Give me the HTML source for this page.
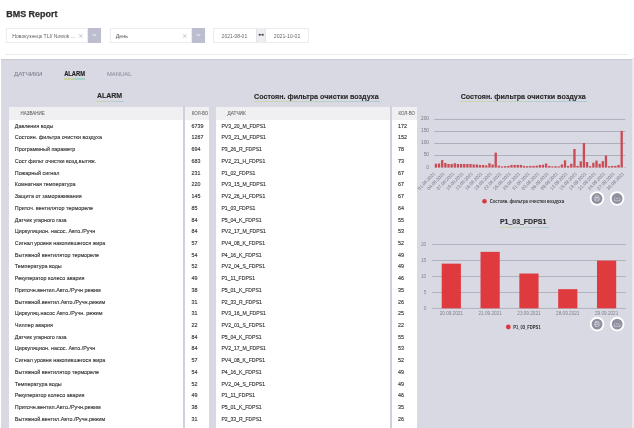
<!DOCTYPE html>
<html><head><meta charset="utf-8">
<style>
*{margin:0;padding:0;box-sizing:border-box}
html,body{width:634px;height:428px;overflow:hidden;background:#fff;font-family:"Liberation Sans",sans-serif;color:#333}
.a{position:absolute}
.ov{position:absolute;left:0;top:0;font-family:"Liberation Sans",sans-serif}
.sel{position:absolute;top:28.2px;height:14.4px;background:#fff;border:0.6px solid #ebebf0}
.btn{position:absolute;top:28.2px;height:14.4px;width:12.9px;background:#bdbdd0}
.hl{left:4.5px;top:53.8px;width:623.5px;height:0.9px;background:#ebebef}
.panel{left:1px;top:58.5px;width:631.3px;height:370px;background:#d9d9e4;border-top:1px solid #cacad4}
.ul{height:1px;background:linear-gradient(90deg,#cfd6a6,#bdd4c0 45%,#abc8dc)}
.tbl{background:#fff;top:106.6px;height:330px}
.hdr{top:106.6px;height:13.2px;background:#f0f0f3}
</style></head><body><div id="wrap" style="position:absolute;left:0;top:0;width:634px;height:428px;filter:blur(0.28px)">

<div class="sel" style="left:6.1px;width:82.2px"></div>
<div class="btn" style="left:88.3px"><svg width="13" height="14" style="position:absolute;left:0;top:0"><path d="M4.6 6 L6.4 7.8 L8.2 6" fill="none" stroke="#ffffff" stroke-width="0.85"/></svg></div>
<svg class="a" style="left:77px;top:34px" width="8" height="5"><path d="M2 0.2 L5.4 3.6 M5.4 0.2 L2 3.6" stroke="#a5a5a5" stroke-width="0.6"/></svg>

<div class="sel" style="left:109.5px;width:82.2px"></div>
<div class="btn" style="left:191.7px;width:13.3px"><svg width="13" height="14" style="position:absolute;left:0;top:0"><path d="M4.8 6 L6.6 7.8 L8.4 6" fill="none" stroke="#ffffff" stroke-width="0.85"/></svg></div>
<svg class="a" style="left:180.5px;top:34px" width="8" height="5"><path d="M2 0.2 L5.4 3.6 M5.4 0.2 L2 3.6" stroke="#a5a5a5" stroke-width="0.6"/></svg>

<div class="sel" style="left:213.2px;width:95.6px"></div>
<div class="a" style="left:256.3px;top:28.5px;width:9.5px;height:13.8px;background:#eeeef1;border-left:0.5px solid #e2e2e8;border-right:0.5px solid #e2e2e8"></div>
<svg class="a" style="left:250px;top:26px" width="22" height="18"><path d="M9.6 8.8 H12.8" stroke="#555" stroke-width="0.7"/><circle cx="9.6" cy="8.8" r="1.05" fill="#4a4a4a"/><circle cx="12.8" cy="8.8" r="1.05" fill="#4a4a4a"/></svg>

<div class="a hl"></div>
<div class="a panel"></div>
<div class="a" style="left:632.3px;top:58.2px;width:2px;height:370px;background:#e9e9ef"></div>

<div class="a ul" style="left:64.2px;top:78px;width:20.8px;height:1.9px;background:linear-gradient(90deg,#c9d39c 0%,#c9d39c 40%,#a6d1cc 60%,#a6d1cc 100%)"></div>
<div class="a ul" style="left:96px;top:100.9px;width:28.1px"></div>
<div class="a ul" style="left:253.5px;top:101px;width:126.5px"></div>
<div class="a ul" style="left:460px;top:100.8px;width:127.3px"></div>
<div class="a ul" style="left:499.5px;top:226.5px;width:49.4px"></div>

<!-- tables -->
<div class="a tbl" style="left:9px;width:174.2px"></div>
<div class="a" style="left:183.2px;top:106.4px;width:1.9px;height:330px;background:#d0d0dc"></div>
<div class="a tbl" style="left:185.1px;width:24.2px"></div>
<div class="a" style="left:209.3px;top:106.4px;width:6.4px;height:330px;background:#d8d8e3"></div>
<div class="a tbl" style="left:215.7px;width:174.7px"></div>
<div class="a" style="left:390.4px;top:106.4px;width:1.6px;height:330px;background:#d0d0dc"></div>
<div class="a tbl" style="left:392px;width:25px"></div>

<div class="a hdr" style="left:9px;width:174.2px"></div>
<div class="a hdr" style="left:185.1px;width:24.2px"></div>
<div class="a hdr" style="left:215.7px;width:174.7px"></div>
<div class="a hdr" style="left:392px;width:25px"></div>

<svg class="ov" width="634" height="428" viewBox="0 0 634 428">
<text x="6.30" y="17.30" font-size="8.6" font-weight="bold" fill="#2e2e2e" stroke="#2e2e2e" stroke-width="0.25" textLength="51.10" lengthAdjust="spacingAndGlyphs">BMS Report</text>
<text x="12.30" y="38.10" font-size="5.5" fill="#666" textLength="62.70" lengthAdjust="spacingAndGlyphs">Новокузнецк TLI/ Nowok ...</text>
<text x="115.70" y="37.90" font-size="5.5" fill="#555" textLength="12.30" lengthAdjust="spacingAndGlyphs">День</text>
<text x="221.60" y="37.90" font-size="5.5" fill="#666" textLength="25.60" lengthAdjust="spacingAndGlyphs">2021-08-01</text>
<text x="273.80" y="37.90" font-size="5.5" fill="#666" textLength="26.50" lengthAdjust="spacingAndGlyphs">2021-10-01</text>
<text x="14.00" y="76.00" font-size="6.2" fill="#8a8a96" stroke="#8a8a96" stroke-width="0.15" textLength="28.40" lengthAdjust="spacingAndGlyphs">ДАТЧИКИ</text>
<text x="64.20" y="76.10" font-size="6.4" font-weight="bold" fill="#222" stroke="#222" stroke-width="0.15" textLength="20.80" lengthAdjust="spacingAndGlyphs">ALARM</text>
<text x="106.90" y="76.00" font-size="6.2" fill="#9c9ca8" stroke="#9c9ca8" stroke-width="0.2" textLength="24.60" lengthAdjust="spacingAndGlyphs">MANUAL</text>
<text x="96.90" y="98.40" font-size="7.9" font-weight="bold" fill="#2b2b2b" stroke="#2b2b2b" stroke-width="0.15" textLength="25.30" lengthAdjust="spacingAndGlyphs">ALARM</text>
<text x="254.10" y="98.60" font-size="7.9" font-weight="bold" fill="#2b2b2b" stroke="#2b2b2b" stroke-width="0.15" textLength="124.55" lengthAdjust="spacingAndGlyphs">Состоян. фильтра очистки воздуха</text>
<text x="460.70" y="98.80" font-size="7.9" font-weight="bold" fill="#2b2b2b" stroke="#2b2b2b" stroke-width="0.15" textLength="125.15" lengthAdjust="spacingAndGlyphs">Состоян. фильтра очистки воздуха</text>
<text x="499.90" y="223.80" font-size="7.6" font-weight="bold" fill="#2b2b2b" stroke="#2b2b2b" stroke-width="0.15" textLength="46.40" lengthAdjust="spacingAndGlyphs">P1_03_FDPS1</text>
<text x="20.60" y="114.60" font-size="4.5" fill="#666" stroke="#666" stroke-width="0.08" textLength="24.10" lengthAdjust="spacingAndGlyphs">НАЗВАНИЕ</text>
<text x="191.80" y="114.60" font-size="4.5" fill="#666" stroke="#666" stroke-width="0.08" textLength="16.40" lengthAdjust="spacingAndGlyphs">КОЛ-ВО</text>
<text x="227.50" y="114.60" font-size="4.5" fill="#666" stroke="#666" stroke-width="0.08" textLength="18.20" lengthAdjust="spacingAndGlyphs">ДАТЧИК</text>
<text x="398.50" y="114.60" font-size="4.5" fill="#666" stroke="#666" stroke-width="0.08" textLength="16.40" lengthAdjust="spacingAndGlyphs">КОЛ-ВО</text>
<text x="14.80" y="127.75" font-size="5.8" fill="#333" stroke="#333" stroke-width="0.13" textLength="38.66" lengthAdjust="spacingAndGlyphs">Давления воды</text>
<text x="191.50" y="127.75" font-size="5.8" fill="#333" stroke="#333" stroke-width="0.13" textLength="11.87" lengthAdjust="spacingAndGlyphs">6739</text>
<text x="14.80" y="139.47" font-size="5.8" fill="#333" stroke="#333" stroke-width="0.13" textLength="87.18" lengthAdjust="spacingAndGlyphs">Состоян. фильтра очистки воздуха</text>
<text x="191.50" y="139.47" font-size="5.8" fill="#333" stroke="#333" stroke-width="0.13" textLength="11.87" lengthAdjust="spacingAndGlyphs">1267</text>
<text x="14.80" y="151.19" font-size="5.8" fill="#333" stroke="#333" stroke-width="0.13" textLength="60.55" lengthAdjust="spacingAndGlyphs">Программный параметр</text>
<text x="191.50" y="151.19" font-size="5.8" fill="#333" stroke="#333" stroke-width="0.13" textLength="8.90" lengthAdjust="spacingAndGlyphs">694</text>
<text x="14.80" y="162.91" font-size="5.8" fill="#333" stroke="#333" stroke-width="0.13" textLength="81.25" lengthAdjust="spacingAndGlyphs">Сост фильт очистки возд.вытяж.</text>
<text x="191.50" y="162.91" font-size="5.8" fill="#333" stroke="#333" stroke-width="0.13" textLength="8.90" lengthAdjust="spacingAndGlyphs">683</text>
<text x="14.80" y="174.63" font-size="5.8" fill="#333" stroke="#333" stroke-width="0.13" textLength="44.60" lengthAdjust="spacingAndGlyphs">Пожарный сигнал</text>
<text x="191.50" y="174.63" font-size="5.8" fill="#333" stroke="#333" stroke-width="0.13" textLength="8.90" lengthAdjust="spacingAndGlyphs">231</text>
<text x="14.80" y="186.35" font-size="5.8" fill="#333" stroke="#333" stroke-width="0.13" textLength="60.67" lengthAdjust="spacingAndGlyphs">Комнатная температура</text>
<text x="191.50" y="186.35" font-size="5.8" fill="#333" stroke="#333" stroke-width="0.13" textLength="8.90" lengthAdjust="spacingAndGlyphs">220</text>
<text x="14.80" y="198.07" font-size="5.8" fill="#333" stroke="#333" stroke-width="0.13" textLength="66.99" lengthAdjust="spacingAndGlyphs">Защита от замораживания</text>
<text x="191.50" y="198.07" font-size="5.8" fill="#333" stroke="#333" stroke-width="0.13" textLength="8.90" lengthAdjust="spacingAndGlyphs">145</text>
<text x="14.80" y="209.79" font-size="5.8" fill="#333" stroke="#333" stroke-width="0.13" textLength="78.32" lengthAdjust="spacingAndGlyphs">Приточ. вентилятор термореле</text>
<text x="191.50" y="209.79" font-size="5.8" fill="#333" stroke="#333" stroke-width="0.13" textLength="5.94" lengthAdjust="spacingAndGlyphs">85</text>
<text x="14.80" y="221.51" font-size="5.8" fill="#333" stroke="#333" stroke-width="0.13" textLength="51.82" lengthAdjust="spacingAndGlyphs">Датчик угарного газа</text>
<text x="191.50" y="221.51" font-size="5.8" fill="#333" stroke="#333" stroke-width="0.13" textLength="5.94" lengthAdjust="spacingAndGlyphs">84</text>
<text x="14.80" y="233.23" font-size="5.8" fill="#333" stroke="#333" stroke-width="0.13" textLength="80.42" lengthAdjust="spacingAndGlyphs">Циркуляцион. насос. Авто./Ручн</text>
<text x="191.50" y="233.23" font-size="5.8" fill="#333" stroke="#333" stroke-width="0.13" textLength="5.94" lengthAdjust="spacingAndGlyphs">84</text>
<text x="14.80" y="244.95" font-size="5.8" fill="#333" stroke="#333" stroke-width="0.13" textLength="90.51" lengthAdjust="spacingAndGlyphs">Сигнал уровня накопившегося жира</text>
<text x="191.50" y="244.95" font-size="5.8" fill="#333" stroke="#333" stroke-width="0.13" textLength="5.94" lengthAdjust="spacingAndGlyphs">57</text>
<text x="14.80" y="256.67" font-size="5.8" fill="#333" stroke="#333" stroke-width="0.13" textLength="84.29" lengthAdjust="spacingAndGlyphs">Вытяжной вентилятор термореле</text>
<text x="191.50" y="256.67" font-size="5.8" fill="#333" stroke="#333" stroke-width="0.13" textLength="5.94" lengthAdjust="spacingAndGlyphs">54</text>
<text x="14.80" y="268.39" font-size="5.8" fill="#333" stroke="#333" stroke-width="0.13" textLength="46.88" lengthAdjust="spacingAndGlyphs">Температура воды</text>
<text x="191.50" y="268.39" font-size="5.8" fill="#333" stroke="#333" stroke-width="0.13" textLength="5.94" lengthAdjust="spacingAndGlyphs">52</text>
<text x="14.80" y="280.11" font-size="5.8" fill="#333" stroke="#333" stroke-width="0.13" textLength="69.63" lengthAdjust="spacingAndGlyphs">Рекуператор колесо авария</text>
<text x="191.50" y="280.11" font-size="5.8" fill="#333" stroke="#333" stroke-width="0.13" textLength="5.94" lengthAdjust="spacingAndGlyphs">49</text>
<text x="14.80" y="291.83" font-size="5.8" fill="#333" stroke="#333" stroke-width="0.13" textLength="85.99" lengthAdjust="spacingAndGlyphs">Приточн.вентил.Авто./Ручн режим</text>
<text x="191.50" y="291.83" font-size="5.8" fill="#333" stroke="#333" stroke-width="0.13" textLength="5.94" lengthAdjust="spacingAndGlyphs">38</text>
<text x="14.80" y="303.55" font-size="5.8" fill="#333" stroke="#333" stroke-width="0.13" textLength="90.48" lengthAdjust="spacingAndGlyphs">Вытяжной.вентил.Авто./Ручн.режим</text>
<text x="191.50" y="303.55" font-size="5.8" fill="#333" stroke="#333" stroke-width="0.13" textLength="5.94" lengthAdjust="spacingAndGlyphs">31</text>
<text x="14.80" y="315.27" font-size="5.8" fill="#333" stroke="#333" stroke-width="0.13" textLength="87.69" lengthAdjust="spacingAndGlyphs">Циркуляц.насос Авто./Ручн. режим</text>
<text x="191.50" y="315.27" font-size="5.8" fill="#333" stroke="#333" stroke-width="0.13" textLength="5.94" lengthAdjust="spacingAndGlyphs">31</text>
<text x="14.80" y="326.99" font-size="5.8" fill="#333" stroke="#333" stroke-width="0.13" textLength="38.14" lengthAdjust="spacingAndGlyphs">Чиллер авария</text>
<text x="191.50" y="326.99" font-size="5.8" fill="#333" stroke="#333" stroke-width="0.13" textLength="5.94" lengthAdjust="spacingAndGlyphs">22</text>
<text x="14.80" y="338.71" font-size="5.8" fill="#333" stroke="#333" stroke-width="0.13" textLength="51.82" lengthAdjust="spacingAndGlyphs">Датчик угарного газа</text>
<text x="191.50" y="338.71" font-size="5.8" fill="#333" stroke="#333" stroke-width="0.13" textLength="5.94" lengthAdjust="spacingAndGlyphs">84</text>
<text x="14.80" y="350.43" font-size="5.8" fill="#333" stroke="#333" stroke-width="0.13" textLength="80.42" lengthAdjust="spacingAndGlyphs">Циркуляцион. насос. Авто./Ручн</text>
<text x="191.50" y="350.43" font-size="5.8" fill="#333" stroke="#333" stroke-width="0.13" textLength="5.94" lengthAdjust="spacingAndGlyphs">84</text>
<text x="14.80" y="362.15" font-size="5.8" fill="#333" stroke="#333" stroke-width="0.13" textLength="90.51" lengthAdjust="spacingAndGlyphs">Сигнал уровня накопившегося жира</text>
<text x="191.50" y="362.15" font-size="5.8" fill="#333" stroke="#333" stroke-width="0.13" textLength="5.94" lengthAdjust="spacingAndGlyphs">57</text>
<text x="14.80" y="373.87" font-size="5.8" fill="#333" stroke="#333" stroke-width="0.13" textLength="84.29" lengthAdjust="spacingAndGlyphs">Вытяжной вентилятор термореле</text>
<text x="191.50" y="373.87" font-size="5.8" fill="#333" stroke="#333" stroke-width="0.13" textLength="5.94" lengthAdjust="spacingAndGlyphs">54</text>
<text x="14.80" y="385.59" font-size="5.8" fill="#333" stroke="#333" stroke-width="0.13" textLength="46.88" lengthAdjust="spacingAndGlyphs">Температура воды</text>
<text x="191.50" y="385.59" font-size="5.8" fill="#333" stroke="#333" stroke-width="0.13" textLength="5.94" lengthAdjust="spacingAndGlyphs">52</text>
<text x="14.80" y="397.31" font-size="5.8" fill="#333" stroke="#333" stroke-width="0.13" textLength="69.63" lengthAdjust="spacingAndGlyphs">Рекуператор колесо авария</text>
<text x="191.50" y="397.31" font-size="5.8" fill="#333" stroke="#333" stroke-width="0.13" textLength="5.94" lengthAdjust="spacingAndGlyphs">49</text>
<text x="14.80" y="409.03" font-size="5.8" fill="#333" stroke="#333" stroke-width="0.13" textLength="85.99" lengthAdjust="spacingAndGlyphs">Приточн.вентил.Авто./Ручн.режим</text>
<text x="191.50" y="409.03" font-size="5.8" fill="#333" stroke="#333" stroke-width="0.13" textLength="5.94" lengthAdjust="spacingAndGlyphs">38</text>
<text x="14.80" y="420.75" font-size="5.8" fill="#333" stroke="#333" stroke-width="0.13" textLength="90.48" lengthAdjust="spacingAndGlyphs">Вытяжной.вентил.Авто./Ручн.режим</text>
<text x="191.50" y="420.75" font-size="5.8" fill="#333" stroke="#333" stroke-width="0.13" textLength="5.94" lengthAdjust="spacingAndGlyphs">31</text>
<text x="221.40" y="127.75" font-size="5.8" fill="#333" stroke="#333" stroke-width="0.13" textLength="44.54" lengthAdjust="spacingAndGlyphs">PV3_20_M_FDPS1</text>
<text x="398.10" y="127.75" font-size="5.8" fill="#333" stroke="#333" stroke-width="0.13" textLength="8.90" lengthAdjust="spacingAndGlyphs">172</text>
<text x="221.40" y="139.47" font-size="5.8" fill="#333" stroke="#333" stroke-width="0.13" textLength="44.54" lengthAdjust="spacingAndGlyphs">PV3_21_M_FDPS1</text>
<text x="398.10" y="139.47" font-size="5.8" fill="#333" stroke="#333" stroke-width="0.13" textLength="8.90" lengthAdjust="spacingAndGlyphs">152</text>
<text x="221.40" y="151.19" font-size="5.8" fill="#333" stroke="#333" stroke-width="0.13" textLength="40.57" lengthAdjust="spacingAndGlyphs">P3_26_R_FDPS1</text>
<text x="398.10" y="151.19" font-size="5.8" fill="#333" stroke="#333" stroke-width="0.13" textLength="5.94" lengthAdjust="spacingAndGlyphs">78</text>
<text x="221.40" y="162.91" font-size="5.8" fill="#333" stroke="#333" stroke-width="0.13" textLength="43.98" lengthAdjust="spacingAndGlyphs">PV2_21_H_FDPS1</text>
<text x="398.10" y="162.91" font-size="5.8" fill="#333" stroke="#333" stroke-width="0.13" textLength="5.94" lengthAdjust="spacingAndGlyphs">73</text>
<text x="221.40" y="174.63" font-size="5.8" fill="#333" stroke="#333" stroke-width="0.13" textLength="34.05" lengthAdjust="spacingAndGlyphs">P1_02_FDPS1</text>
<text x="398.10" y="174.63" font-size="5.8" fill="#333" stroke="#333" stroke-width="0.13" textLength="5.94" lengthAdjust="spacingAndGlyphs">67</text>
<text x="221.40" y="186.35" font-size="5.8" fill="#333" stroke="#333" stroke-width="0.13" textLength="44.54" lengthAdjust="spacingAndGlyphs">PV3_15_M_FDPS1</text>
<text x="398.10" y="186.35" font-size="5.8" fill="#333" stroke="#333" stroke-width="0.13" textLength="5.94" lengthAdjust="spacingAndGlyphs">67</text>
<text x="221.40" y="198.07" font-size="5.8" fill="#333" stroke="#333" stroke-width="0.13" textLength="43.98" lengthAdjust="spacingAndGlyphs">PV2_26_H_FDPS1</text>
<text x="398.10" y="198.07" font-size="5.8" fill="#333" stroke="#333" stroke-width="0.13" textLength="5.94" lengthAdjust="spacingAndGlyphs">67</text>
<text x="221.40" y="209.79" font-size="5.8" fill="#333" stroke="#333" stroke-width="0.13" textLength="34.05" lengthAdjust="spacingAndGlyphs">P1_03_FDPS1</text>
<text x="398.10" y="209.79" font-size="5.8" fill="#333" stroke="#333" stroke-width="0.13" textLength="5.94" lengthAdjust="spacingAndGlyphs">64</text>
<text x="221.40" y="221.51" font-size="5.8" fill="#333" stroke="#333" stroke-width="0.13" textLength="40.29" lengthAdjust="spacingAndGlyphs">P5_04_K_FDPS1</text>
<text x="398.10" y="221.51" font-size="5.8" fill="#333" stroke="#333" stroke-width="0.13" textLength="5.94" lengthAdjust="spacingAndGlyphs">55</text>
<text x="221.40" y="233.23" font-size="5.8" fill="#333" stroke="#333" stroke-width="0.13" textLength="44.54" lengthAdjust="spacingAndGlyphs">PV2_17_M_FDPS1</text>
<text x="398.10" y="233.23" font-size="5.8" fill="#333" stroke="#333" stroke-width="0.13" textLength="5.94" lengthAdjust="spacingAndGlyphs">53</text>
<text x="221.40" y="244.95" font-size="5.8" fill="#333" stroke="#333" stroke-width="0.13" textLength="43.70" lengthAdjust="spacingAndGlyphs">PV4_08_K_FDPS1</text>
<text x="398.10" y="244.95" font-size="5.8" fill="#333" stroke="#333" stroke-width="0.13" textLength="5.94" lengthAdjust="spacingAndGlyphs">52</text>
<text x="221.40" y="256.67" font-size="5.8" fill="#333" stroke="#333" stroke-width="0.13" textLength="40.29" lengthAdjust="spacingAndGlyphs">P4_16_K_FDPS1</text>
<text x="398.10" y="256.67" font-size="5.8" fill="#333" stroke="#333" stroke-width="0.13" textLength="5.94" lengthAdjust="spacingAndGlyphs">49</text>
<text x="221.40" y="268.39" font-size="5.8" fill="#333" stroke="#333" stroke-width="0.13" textLength="43.70" lengthAdjust="spacingAndGlyphs">PV2_04_S_FDPS1</text>
<text x="398.10" y="268.39" font-size="5.8" fill="#333" stroke="#333" stroke-width="0.13" textLength="5.94" lengthAdjust="spacingAndGlyphs">49</text>
<text x="221.40" y="280.11" font-size="5.8" fill="#333" stroke="#333" stroke-width="0.13" textLength="33.67" lengthAdjust="spacingAndGlyphs">P1_11_FDPS1</text>
<text x="398.10" y="280.11" font-size="5.8" fill="#333" stroke="#333" stroke-width="0.13" textLength="5.94" lengthAdjust="spacingAndGlyphs">46</text>
<text x="221.40" y="291.83" font-size="5.8" fill="#333" stroke="#333" stroke-width="0.13" textLength="40.29" lengthAdjust="spacingAndGlyphs">P5_01_K_FDPS1</text>
<text x="398.10" y="291.83" font-size="5.8" fill="#333" stroke="#333" stroke-width="0.13" textLength="5.94" lengthAdjust="spacingAndGlyphs">35</text>
<text x="221.40" y="303.55" font-size="5.8" fill="#333" stroke="#333" stroke-width="0.13" textLength="40.57" lengthAdjust="spacingAndGlyphs">P2_33_R_FDPS1</text>
<text x="398.10" y="303.55" font-size="5.8" fill="#333" stroke="#333" stroke-width="0.13" textLength="5.94" lengthAdjust="spacingAndGlyphs">26</text>
<text x="221.40" y="315.27" font-size="5.8" fill="#333" stroke="#333" stroke-width="0.13" textLength="44.54" lengthAdjust="spacingAndGlyphs">PV3_16_M_FDPS1</text>
<text x="398.10" y="315.27" font-size="5.8" fill="#333" stroke="#333" stroke-width="0.13" textLength="5.94" lengthAdjust="spacingAndGlyphs">25</text>
<text x="221.40" y="326.99" font-size="5.8" fill="#333" stroke="#333" stroke-width="0.13" textLength="43.70" lengthAdjust="spacingAndGlyphs">PV2_01_S_FDPS1</text>
<text x="398.10" y="326.99" font-size="5.8" fill="#333" stroke="#333" stroke-width="0.13" textLength="5.94" lengthAdjust="spacingAndGlyphs">22</text>
<text x="221.40" y="338.71" font-size="5.8" fill="#333" stroke="#333" stroke-width="0.13" textLength="40.29" lengthAdjust="spacingAndGlyphs">P5_04_K_FDPS1</text>
<text x="398.10" y="338.71" font-size="5.8" fill="#333" stroke="#333" stroke-width="0.13" textLength="5.94" lengthAdjust="spacingAndGlyphs">55</text>
<text x="221.40" y="350.43" font-size="5.8" fill="#333" stroke="#333" stroke-width="0.13" textLength="44.54" lengthAdjust="spacingAndGlyphs">PV2_17_M_FDPS1</text>
<text x="398.10" y="350.43" font-size="5.8" fill="#333" stroke="#333" stroke-width="0.13" textLength="5.94" lengthAdjust="spacingAndGlyphs">53</text>
<text x="221.40" y="362.15" font-size="5.8" fill="#333" stroke="#333" stroke-width="0.13" textLength="43.70" lengthAdjust="spacingAndGlyphs">PV4_08_K_FDPS1</text>
<text x="398.10" y="362.15" font-size="5.8" fill="#333" stroke="#333" stroke-width="0.13" textLength="5.94" lengthAdjust="spacingAndGlyphs">52</text>
<text x="221.40" y="373.87" font-size="5.8" fill="#333" stroke="#333" stroke-width="0.13" textLength="40.29" lengthAdjust="spacingAndGlyphs">P4_16_K_FDPS1</text>
<text x="398.10" y="373.87" font-size="5.8" fill="#333" stroke="#333" stroke-width="0.13" textLength="5.94" lengthAdjust="spacingAndGlyphs">49</text>
<text x="221.40" y="385.59" font-size="5.8" fill="#333" stroke="#333" stroke-width="0.13" textLength="43.70" lengthAdjust="spacingAndGlyphs">PV2_04_S_FDPS1</text>
<text x="398.10" y="385.59" font-size="5.8" fill="#333" stroke="#333" stroke-width="0.13" textLength="5.94" lengthAdjust="spacingAndGlyphs">49</text>
<text x="221.40" y="397.31" font-size="5.8" fill="#333" stroke="#333" stroke-width="0.13" textLength="33.67" lengthAdjust="spacingAndGlyphs">P1_11_FDPS1</text>
<text x="398.10" y="397.31" font-size="5.8" fill="#333" stroke="#333" stroke-width="0.13" textLength="5.94" lengthAdjust="spacingAndGlyphs">46</text>
<text x="221.40" y="409.03" font-size="5.8" fill="#333" stroke="#333" stroke-width="0.13" textLength="40.29" lengthAdjust="spacingAndGlyphs">P5_01_K_FDPS1</text>
<text x="398.10" y="409.03" font-size="5.8" fill="#333" stroke="#333" stroke-width="0.13" textLength="5.94" lengthAdjust="spacingAndGlyphs">35</text>
<text x="221.40" y="420.75" font-size="5.8" fill="#333" stroke="#333" stroke-width="0.13" textLength="40.57" lengthAdjust="spacingAndGlyphs">P2_33_R_FDPS1</text>
<text x="398.10" y="420.75" font-size="5.8" fill="#333" stroke="#333" stroke-width="0.13" textLength="5.94" lengthAdjust="spacingAndGlyphs">26</text>
<rect x="434.2" y="155.18" width="191.00" height="0.7" fill="#9c9cab"/>
<rect x="434.2" y="143.10" width="191.00" height="0.7" fill="#9c9cab"/>
<rect x="434.2" y="131.03" width="191.00" height="0.7" fill="#9c9cab"/>
<rect x="434.2" y="118.95" width="191.00" height="0.7" fill="#9c9cab"/>
<text x="426.33" y="168.50" font-size="4.8" fill="#7a7a84">0</text>
<text x="423.66" y="156.43" font-size="4.8" fill="#7a7a84">50</text>
<text x="420.99" y="144.35" font-size="4.8" fill="#7a7a84">100</text>
<text x="420.99" y="132.28" font-size="4.8" fill="#7a7a84">150</text>
<text x="420.99" y="120.20" font-size="4.8" fill="#7a7a84">200</text>
<rect x="434.75" y="163.74" width="2.3" height="3.86" fill="#c94b53"/>
<rect x="437.90" y="163.49" width="2.3" height="4.11" fill="#c94b53"/>
<rect x="441.05" y="160.11" width="2.3" height="7.49" fill="#c94b53"/>
<rect x="444.20" y="163.01" width="2.3" height="4.59" fill="#c94b53"/>
<rect x="447.35" y="163.98" width="2.3" height="3.62" fill="#c94b53"/>
<rect x="450.50" y="163.98" width="2.3" height="3.62" fill="#c94b53"/>
<rect x="453.64" y="163.25" width="2.3" height="4.35" fill="#c94b53"/>
<rect x="456.79" y="163.98" width="2.3" height="3.62" fill="#c94b53"/>
<rect x="459.94" y="163.98" width="2.3" height="3.62" fill="#c94b53"/>
<rect x="463.09" y="163.98" width="2.3" height="3.62" fill="#c94b53"/>
<rect x="466.24" y="163.98" width="2.3" height="3.62" fill="#c94b53"/>
<rect x="469.39" y="163.98" width="2.3" height="3.62" fill="#c94b53"/>
<rect x="472.54" y="164.46" width="2.3" height="3.14" fill="#c94b53"/>
<rect x="475.69" y="164.46" width="2.3" height="3.14" fill="#c94b53"/>
<rect x="478.84" y="164.94" width="2.3" height="2.66" fill="#c94b53"/>
<rect x="481.99" y="164.94" width="2.3" height="2.66" fill="#c94b53"/>
<rect x="485.13" y="165.43" width="2.3" height="2.17" fill="#c94b53"/>
<rect x="488.28" y="163.25" width="2.3" height="4.35" fill="#c94b53"/>
<rect x="491.43" y="164.46" width="2.3" height="3.14" fill="#c94b53"/>
<rect x="494.58" y="152.63" width="2.3" height="14.97" fill="#c94b53"/>
<rect x="497.73" y="165.67" width="2.3" height="1.93" fill="#c94b53"/>
<rect x="500.88" y="166.39" width="2.3" height="1.21" fill="#c94b53"/>
<rect x="504.03" y="166.15" width="2.3" height="1.45" fill="#c94b53"/>
<rect x="507.18" y="165.91" width="2.3" height="1.69" fill="#c94b53"/>
<rect x="510.33" y="164.94" width="2.3" height="2.66" fill="#c94b53"/>
<rect x="513.48" y="164.94" width="2.3" height="2.66" fill="#c94b53"/>
<rect x="516.62" y="164.94" width="2.3" height="2.66" fill="#c94b53"/>
<rect x="519.77" y="164.94" width="2.3" height="2.66" fill="#c94b53"/>
<rect x="522.92" y="165.91" width="2.3" height="1.69" fill="#c94b53"/>
<rect x="526.07" y="166.15" width="2.3" height="1.45" fill="#c94b53"/>
<rect x="529.22" y="165.91" width="2.3" height="1.69" fill="#c94b53"/>
<rect x="532.37" y="165.91" width="2.3" height="1.69" fill="#c94b53"/>
<rect x="535.52" y="165.67" width="2.3" height="1.93" fill="#c94b53"/>
<rect x="538.67" y="164.94" width="2.3" height="2.66" fill="#c94b53"/>
<rect x="541.82" y="164.70" width="2.3" height="2.90" fill="#c94b53"/>
<rect x="544.97" y="163.49" width="2.3" height="4.11" fill="#c94b53"/>
<rect x="548.11" y="165.91" width="2.3" height="1.69" fill="#c94b53"/>
<rect x="551.26" y="166.39" width="2.3" height="1.21" fill="#c94b53"/>
<rect x="554.41" y="166.15" width="2.3" height="1.45" fill="#c94b53"/>
<rect x="557.56" y="166.39" width="2.3" height="1.21" fill="#c94b53"/>
<rect x="560.71" y="164.46" width="2.3" height="3.14" fill="#c94b53"/>
<rect x="563.86" y="160.35" width="2.3" height="7.25" fill="#c94b53"/>
<rect x="567.01" y="165.91" width="2.3" height="1.69" fill="#c94b53"/>
<rect x="570.16" y="163.74" width="2.3" height="3.86" fill="#c94b53"/>
<rect x="573.31" y="149.00" width="2.3" height="18.60" fill="#c94b53"/>
<rect x="576.46" y="165.91" width="2.3" height="1.69" fill="#c94b53"/>
<rect x="579.60" y="161.32" width="2.3" height="6.28" fill="#c94b53"/>
<rect x="582.75" y="142.97" width="2.3" height="24.63" fill="#c94b53"/>
<rect x="585.90" y="162.05" width="2.3" height="5.55" fill="#c94b53"/>
<rect x="589.05" y="166.15" width="2.3" height="1.45" fill="#c94b53"/>
<rect x="592.20" y="162.77" width="2.3" height="4.83" fill="#c94b53"/>
<rect x="595.35" y="160.60" width="2.3" height="7.00" fill="#c94b53"/>
<rect x="598.50" y="163.74" width="2.3" height="3.86" fill="#c94b53"/>
<rect x="601.65" y="161.08" width="2.3" height="6.52" fill="#c94b53"/>
<rect x="604.80" y="155.53" width="2.3" height="12.07" fill="#c94b53"/>
<rect x="607.95" y="166.15" width="2.3" height="1.45" fill="#c94b53"/>
<rect x="611.09" y="165.91" width="2.3" height="1.69" fill="#c94b53"/>
<rect x="614.24" y="165.91" width="2.3" height="1.69" fill="#c94b53"/>
<rect x="617.39" y="164.94" width="2.3" height="2.66" fill="#c94b53"/>
<rect x="620.54" y="130.89" width="2.3" height="36.71" fill="#c94b53"/>
<rect x="623.69" y="167.36" width="2.3" height="0.24" fill="#c94b53"/>
<text x="435.60" y="173.90" font-size="4.6" fill="#72727c" text-anchor="end" transform="rotate(-46 435.60 173.90)">01.08.2021</text>
<text x="445.05" y="173.90" font-size="4.6" fill="#72727c" text-anchor="end" transform="rotate(-46 445.05 173.90)">04.08.2021</text>
<text x="454.49" y="173.90" font-size="4.6" fill="#72727c" text-anchor="end" transform="rotate(-46 454.49 173.90)">07.08.2021</text>
<text x="463.94" y="173.90" font-size="4.6" fill="#72727c" text-anchor="end" transform="rotate(-46 463.94 173.90)">10.08.2021</text>
<text x="473.39" y="173.90" font-size="4.6" fill="#72727c" text-anchor="end" transform="rotate(-46 473.39 173.90)">13.08.2021</text>
<text x="482.83" y="173.90" font-size="4.6" fill="#72727c" text-anchor="end" transform="rotate(-46 482.83 173.90)">16.08.2021</text>
<text x="492.28" y="173.90" font-size="4.6" fill="#72727c" text-anchor="end" transform="rotate(-46 492.28 173.90)">19.08.2021</text>
<text x="501.73" y="173.90" font-size="4.6" fill="#72727c" text-anchor="end" transform="rotate(-46 501.73 173.90)">22.08.2021</text>
<text x="511.18" y="173.90" font-size="4.6" fill="#72727c" text-anchor="end" transform="rotate(-46 511.18 173.90)">25.08.2021</text>
<text x="520.62" y="173.90" font-size="4.6" fill="#72727c" text-anchor="end" transform="rotate(-46 520.62 173.90)">28.08.2021</text>
<text x="530.07" y="173.90" font-size="4.6" fill="#72727c" text-anchor="end" transform="rotate(-46 530.07 173.90)">31.08.2021</text>
<text x="539.52" y="173.90" font-size="4.6" fill="#72727c" text-anchor="end" transform="rotate(-46 539.52 173.90)">03.09.2021</text>
<text x="548.96" y="173.90" font-size="4.6" fill="#72727c" text-anchor="end" transform="rotate(-46 548.96 173.90)">06.09.2021</text>
<text x="558.41" y="173.90" font-size="4.6" fill="#72727c" text-anchor="end" transform="rotate(-46 558.41 173.90)">09.09.2021</text>
<text x="567.86" y="173.90" font-size="4.6" fill="#72727c" text-anchor="end" transform="rotate(-46 567.86 173.90)">12.09.2021</text>
<text x="577.31" y="173.90" font-size="4.6" fill="#72727c" text-anchor="end" transform="rotate(-46 577.31 173.90)">15.09.2021</text>
<text x="586.75" y="173.90" font-size="4.6" fill="#72727c" text-anchor="end" transform="rotate(-46 586.75 173.90)">18.09.2021</text>
<text x="596.20" y="173.90" font-size="4.6" fill="#72727c" text-anchor="end" transform="rotate(-46 596.20 173.90)">21.09.2021</text>
<text x="605.65" y="173.90" font-size="4.6" fill="#72727c" text-anchor="end" transform="rotate(-46 605.65 173.90)">24.09.2021</text>
<text x="615.09" y="173.90" font-size="4.6" fill="#72727c" text-anchor="end" transform="rotate(-46 615.09 173.90)">27.09.2021</text>
<text x="624.54" y="173.90" font-size="4.6" fill="#72727c" text-anchor="end" transform="rotate(-46 624.54 173.90)">30.09.2021</text>
<circle cx="484.5" cy="201.3" r="2.3" fill="#d63a40"/>
<text x="489.70" y="203.30" font-size="4.8" font-weight="bold" fill="#2e2e2e" textLength="74.37" lengthAdjust="spacingAndGlyphs">Состоян. фильтра очистки воздуха</text>
<rect x="431.9" y="307.95" width="194.10" height="0.7" fill="#a3a3b1"/>
<text x="423.63" y="309.90" font-size="4.8" fill="#85858f">0</text>
<rect x="431.9" y="292.00" width="194.10" height="0.7" fill="#a3a3b1"/>
<text x="423.63" y="293.95" font-size="4.8" fill="#85858f">5</text>
<rect x="431.9" y="276.05" width="194.10" height="0.7" fill="#a3a3b1"/>
<text x="420.96" y="278.00" font-size="4.8" fill="#85858f">10</text>
<rect x="431.9" y="260.10" width="194.10" height="0.7" fill="#a3a3b1"/>
<text x="420.96" y="262.05" font-size="4.8" fill="#85858f">15</text>
<rect x="431.9" y="244.15" width="194.10" height="0.7" fill="#a3a3b1"/>
<text x="420.96" y="246.10" font-size="4.8" fill="#85858f">20</text>
<rect x="441.71" y="263.64" width="19.2" height="44.66" fill="#df3a3e"/>
<text x="439.66" y="315.30" font-size="4.6" fill="#80808a" textLength="23.30" lengthAdjust="spacingAndGlyphs">20.09.2021</text>
<rect x="480.53" y="251.84" width="19.2" height="56.46" fill="#df3a3e"/>
<text x="478.48" y="315.30" font-size="4.6" fill="#80808a" textLength="23.30" lengthAdjust="spacingAndGlyphs">21.09.2021</text>
<rect x="519.35" y="273.53" width="19.2" height="34.77" fill="#df3a3e"/>
<text x="517.30" y="315.30" font-size="4.6" fill="#80808a" textLength="23.30" lengthAdjust="spacingAndGlyphs">23.09.2021</text>
<rect x="558.17" y="289.16" width="19.2" height="19.14" fill="#df3a3e"/>
<text x="556.12" y="315.30" font-size="4.6" fill="#80808a" textLength="23.30" lengthAdjust="spacingAndGlyphs">28.09.2021</text>
<rect x="596.99" y="260.61" width="19.2" height="47.69" fill="#df3a3e"/>
<text x="594.94" y="315.30" font-size="4.6" fill="#80808a" textLength="23.30" lengthAdjust="spacingAndGlyphs">29.09.2021</text>
<circle cx="508.3" cy="327" r="2.4" fill="#d63a40"/>
<text x="513.20" y="328.90" font-size="4.8" font-weight="bold" fill="#2e2e2e" textLength="27.30" lengthAdjust="spacingAndGlyphs">P1_03_FDPS1</text>
<circle cx="597" cy="198.5" r="7.3" fill="#ffffff"/>
<circle cx="597" cy="198.5" r="5.4" fill="#8f8f9f"/>
<rect x="595.50" y="195.80" width="3" height="1.5" fill="none" stroke="#dcdce4" stroke-width="0.55"/>
<rect x="594.30" y="197.30" width="5.4" height="2.6" rx="0.6" fill="none" stroke="#dcdce4" stroke-width="0.55"/>
<rect x="595.50" y="198.90" width="3" height="2" fill="#8f8f9f" stroke="#dcdce4" stroke-width="0.55"/>
<circle cx="617.1" cy="198.5" r="7.3" fill="#ffffff"/>
<circle cx="617.1" cy="198.5" r="5.4" fill="#8f8f9f"/>
<path d="M614.30 198.30 V200.80 H619.90 V198.30" fill="none" stroke="#dcdce4" stroke-width="0.65"/>
<path d="M615.50 197.30 L617.10 199.00 L618.70 197.30" fill="none" stroke="#dcdce4" stroke-width="0.65"/>
<circle cx="597.1" cy="324.1" r="7.3" fill="#ffffff"/>
<circle cx="597.1" cy="324.1" r="5.4" fill="#8f8f9f"/>
<rect x="595.60" y="321.40" width="3" height="1.5" fill="none" stroke="#dcdce4" stroke-width="0.55"/>
<rect x="594.40" y="322.90" width="5.4" height="2.6" rx="0.6" fill="none" stroke="#dcdce4" stroke-width="0.55"/>
<rect x="595.60" y="324.50" width="3" height="2" fill="#8f8f9f" stroke="#dcdce4" stroke-width="0.55"/>
<circle cx="617.2" cy="324.1" r="7.3" fill="#ffffff"/>
<circle cx="617.2" cy="324.1" r="5.4" fill="#8f8f9f"/>
<path d="M614.40 323.90 V326.40 H620.00 V323.90" fill="none" stroke="#dcdce4" stroke-width="0.65"/>
<path d="M615.60 322.90 L617.20 324.60 L618.80 322.90" fill="none" stroke="#dcdce4" stroke-width="0.65"/>
</svg>

</div></body></html>
